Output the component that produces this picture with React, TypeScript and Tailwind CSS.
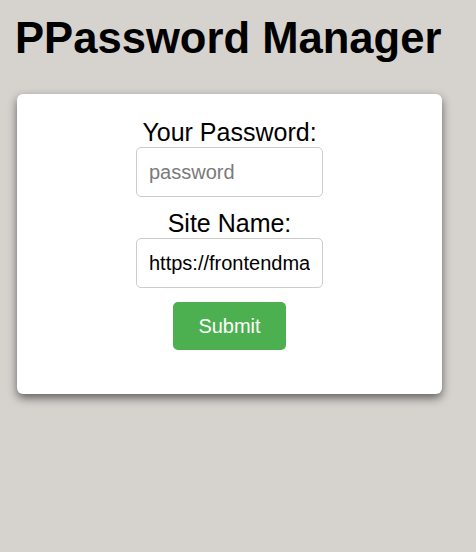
import React from "react";

export default function App() {
  return (
    <div className="min-h-[552px] w-full bg-[#d6d3cf] pt-[13px] pl-[17px]" style={{ fontFamily: '"Liberation Sans", Arial, sans-serif' }}>
      <h1 className="text-[43.6px] font-bold leading-[50px] text-black -ml-[2px]">PPassword Manager</h1>
      <div className="mt-[31px] w-[425px] h-[300px] bg-white rounded-[6px] shadow-[0_4px_10px_rgba(0,0,0,0.55)] flex flex-col items-center pt-[24px]">
        <label className="text-[25px] leading-[29px] text-black">Your Password:</label>
        <input
          type="password"
          placeholder="password"
          className="w-[187px] h-[50px] border border-[#cccccc] rounded-[5px] px-[12px] text-[20px] text-black placeholder:text-[#7a7a7a] outline-none"
        />
        <label className="mt-[12px] text-[25px] leading-[29px] text-black">Site Name:</label>
        <input
          type="text"
          defaultValue="https://frontendmasters.com"
          className="w-[187px] h-[50px] border border-[#cccccc] rounded-[5px] px-[12px] text-[20px] text-black outline-none"
        />
        <button className="mt-[14px] w-[113px] h-[48px] bg-[#4caf50] rounded-[5px] text-white text-[20px]">Submit</button>
      </div>
    </div>
  );
}
